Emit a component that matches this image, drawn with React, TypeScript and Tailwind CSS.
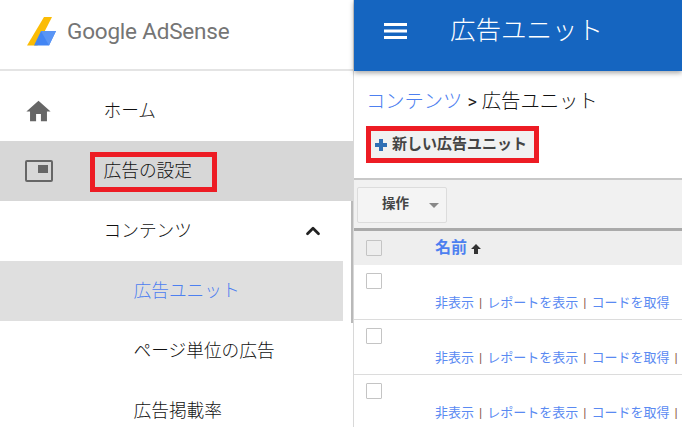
import { ChevronUp } from 'lucide-react';

const font = { fontFamily: '"Roboto", "Noto Sans CJK JP", sans-serif' };

function AdsenseLogo() {
  return (
    <svg width="31" height="30" viewBox="0 0 31 30" className="shrink-0 -ml-[1px]">
      <polygon points="18,1 26,1 11.5,29.5 1,29.5" fill="#fbbc05" />
      <polygon points="15,15 30,15 23,29.5 8,29.5" fill="#4285f4" />
      <polygon points="15,15 30,15 23,29.5" fill="#5a95f5" />
    </svg>
  );
}

function HomeIcon() {
  return (
    <svg width="29" height="29" viewBox="0 0 24 24" className="-ml-[1px]">
      <path d="M10 20v-6h4v6h5v-8h3L12 3 2 12h3v8z" fill="#666" />
    </svg>
  );
}

function AdIcon() {
  return (
    <div className="relative w-[28px] h-[22px] border-2 border-[#666] rounded-[2px]">
      <div className="absolute right-[3px] top-[3px] w-[10px] h-[8px] bg-[#666]" />
    </div>
  );
}

function NavItem({ label, icon, active }: { label: string; icon?: React.ReactNode; active?: boolean }) {
  return (
    <div className={`h-[60px] flex items-center ${active ? 'bg-[#d7d7d7]' : ''}`}>
      <div className="w-[103.5px] pl-[25px] flex items-center">{icon}</div>
      <span className="text-[17.7px] font-light text-[#111] pt-[1px]">{label}</span>
    </div>
  );
}

function SubItem({ label, active }: { label: string; active?: boolean }) {
  return (
    <div className={`h-[60px] w-[343px] pl-[133.5px] flex items-center text-[17.7px] font-light ${active ? 'bg-[#dfdfdf] text-[#4d80f0]' : 'text-[#111]'}`}>
      {label}
    </div>
  );
}

function Row({ trailing }: { trailing?: boolean }) {
  return (
    <div className="relative h-[55px] shrink-0 bg-white border-b border-[#dcdcdc] pl-[12px] pt-[8px]">
      <div className="w-4 h-4 border border-[#c4c4c4] rounded-[1px] bg-white" />
      <div className="absolute left-[81px] top-[28px] text-[13px] whitespace-nowrap flex">
        <span className="text-[#5a8af2]">非表示</span>
        <span className="mx-[5px] text-[#8a5a4a]">|</span>
        <span className="text-[#5a8af2]">レポートを表示</span>
        <span className="mx-[5px] text-[#8a5a4a]">|</span>
        <span className="text-[#5a8af2]">コードを取得</span>
        {trailing && <span className="mx-[5px] text-[#8a5a4a]">|</span>}
      </div>
    </div>
  );
}

export default function App() {
  return (
    <div className="relative w-[682px] h-[427px] overflow-hidden flex bg-white" style={font}>
      <aside className="w-[354px] shrink-0 h-full border-r border-[#d8d8d8] bg-white relative">
        <div className="h-[71px] border-b-2 border-[#e4e4e4] pl-[27px] pt-[16px] flex items-start gap-[10px]">
          <AdsenseLogo />
          <span className="text-[22.5px] leading-[30px] text-[#757575] tracking-[-0.2px] whitespace-nowrap">Google AdSense</span>
        </div>
        <div className="pt-[10px]">
          <NavItem label="ホーム" icon={<HomeIcon />} />
          <NavItem label="広告の設定" icon={<AdIcon />} active />
          <div className="h-[60px] flex items-center relative">
            <span className="pl-[103.5px] text-[17.7px] font-light text-[#111]">コンテンツ</span>
            <ChevronUp size={22} strokeWidth={3} className="absolute left-[302px] top-[19px] text-[#222]" />
          </div>
          <SubItem label="広告ユニット" active />
          <SubItem label="ページ単位の広告" />
          <SubItem label="広告掲載率" />
        </div>
        <div className="absolute left-[351px] top-[201px] w-[2px] h-[122px] bg-[#b9b9b9]" />
      </aside>

      <main className="flex-1 min-w-0 flex flex-col">
        <header className="h-[71px] shrink-0 bg-[#1565c0] flex items-start pl-[30px] shadow-[0_2px_5px_rgba(0,0,0,0.35)] relative">
          <svg width="23" height="16" viewBox="0 0 23 16" className="mt-[23px]">
            <rect y="0" width="23" height="3" fill="#fff" />
            <rect y="6.5" width="23" height="3" fill="#fff" />
            <rect y="13" width="23" height="3" fill="#fff" />
          </svg>
          <span className="ml-[43px] mt-[11px] text-[25.5px] leading-[38px] text-white font-light whitespace-nowrap">広告ユニット</span>
        </header>
        <div className="h-[109px] shrink-0 bg-white border-b-2 border-[#c8c8c8] pl-[12px] pt-[19px]">
          <div className="text-[19.3px] leading-[24px] font-light whitespace-nowrap">
            <span className="text-[#4d80f0]">コンテンツ</span>
            <span className="text-[#222] font-normal text-[18px] mx-[5px]">&gt;</span>
            <span className="text-[#111]">広告ユニット</span>
          </div>
          <div className="mt-[17px] ml-[5px] h-[27px] w-[163px] bg-[#f1f1f1] flex items-center pl-[4px] gap-[5px] text-[15px] font-bold text-[#444] whitespace-nowrap">
            <span className="relative w-3 h-3 shrink-0">
              <span className="absolute left-[4px] top-0 w-[4px] h-3 bg-[#2f6fb5]" />
              <span className="absolute left-0 top-[4px] w-3 h-[4px] bg-[#2f6fb5]" />
            </span>
            <span>新しい広告ユニット</span>
          </div>
        </div>
        <div className="h-[51px] shrink-0 bg-[#f1f1f1] border-b-[3px] border-[#aaa] pl-[3px] pt-[7px]">
          <div className="w-[90px] h-[36px] border border-[#dcdcdc] rounded-[2px] bg-[#f4f4f4] flex items-center text-[13.5px] font-bold text-[#444]">
            <span className="ml-[24px] -mt-[3px]">操作</span>
            <span className="ml-[20px] w-0 h-0 border-x-[5px] border-x-transparent border-t-[5px] border-t-[#888]" />
          </div>
        </div>
        <div className="h-[34px] shrink-0 bg-[#eee] relative pl-[12px] pt-[9px]">
          <div className="w-4 h-4 border border-[#c4c4c4] rounded-[1px]" />
          <div className="absolute left-[81px] top-[5px] flex items-center text-[16px] font-bold text-[#4d80f0] leading-[24px]">
            名前
            <svg width="10" height="10" viewBox="0 0 10 10" className="ml-[4px] mt-[2px]">
              <path d="M5 0 L10 5 L7 5 L7 10 L3 10 L3 5 L0 5 Z" fill="#333" />
            </svg>
          </div>
        </div>
        <Row />
        <Row trailing />
        <Row trailing />
      </main>

      <div className="absolute left-[90px] top-[152px] w-[127px] h-[40px] border-[5px] border-[#ed1c24]" />
      <div className="absolute left-[366px] top-[126px] w-[173px] h-[37px] border-[5px] border-[#ed1c24]" />
    </div>
  );
}
